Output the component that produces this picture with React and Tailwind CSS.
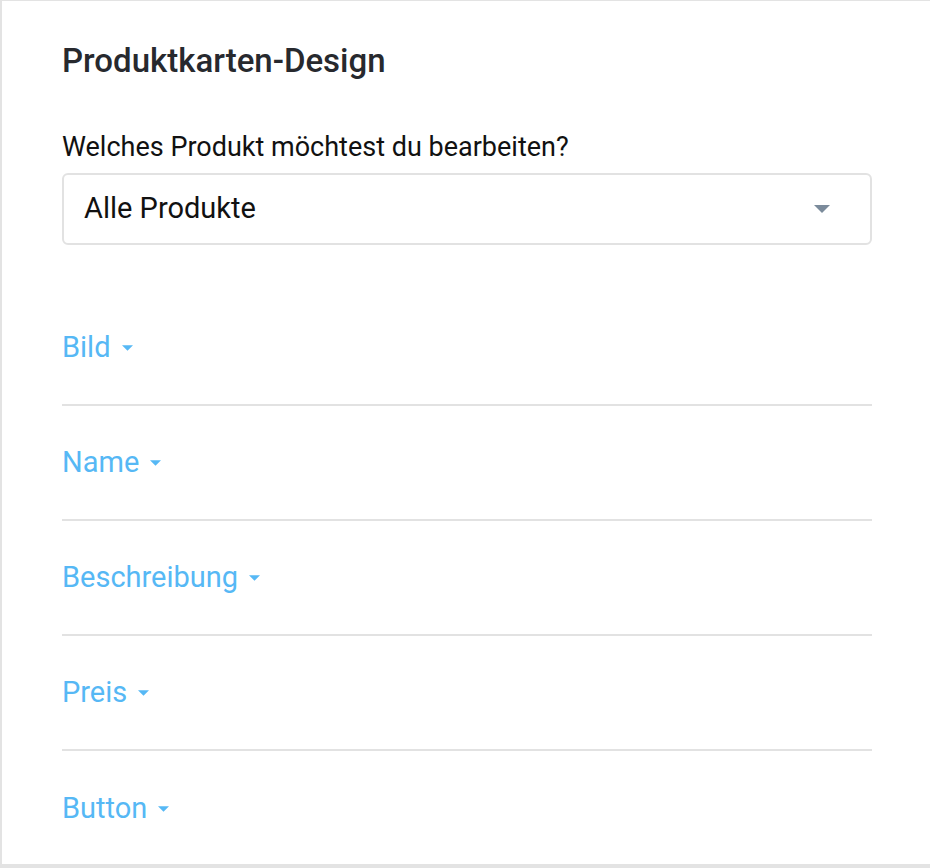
import React from 'react';

const sections = ['Bild', 'Name', 'Beschreibung', 'Preis', 'Button'];

const Caret = ({ className }) => (
  <svg viewBox="0 0 10 5" className={className} fill="currentColor">
    <path d="M0 0h10L5 5z" />
  </svg>
);

const App = () => {
  return (
    <div className="h-[868px] bg-[#e3e3e3] pt-px pl-[2px] overflow-hidden" style={{ fontFamily: 'Roboto, "Noto Sans", sans-serif' }}>
      <div className="h-[863px] bg-white pl-[60px] pr-[58px]">
        <h1 className="pt-[41px] text-[33px] leading-[38px] font-medium text-[#27292e]">
          Produktkarten-Design
        </h1>

        <label className="block mt-[51px] text-[27px] leading-[32px] text-[#111]">
          Welches Produkt möchtest du bearbeiten?
        </label>
        <div className="mt-[10px] h-[72px] rounded-[6px] border-2 border-[#e2e2e2] flex items-center justify-between pl-[20px] pr-[40px]">
          <span className="text-[29px] text-[#111]">Alle Produkte</span>
          <Caret className="w-[16px] h-[8px] text-[#7b8b9b]" />
        </div>

        <div className="mt-[46px]">
          {sections.map((s, i) => (
            <div
              key={s}
              className={`h-[115px] flex items-center ${i < sections.length - 1 ? 'border-b-2 border-[#e2e2e2]' : ''}`}
            >
              <button className="flex items-center gap-[11px] text-[29px] text-[#56b8f5]">
                {s}
                <Caret className="w-[11px] h-[6px]" />
              </button>
            </div>
          ))}
        </div>
      </div>
    </div>
  );
};

export default App;
